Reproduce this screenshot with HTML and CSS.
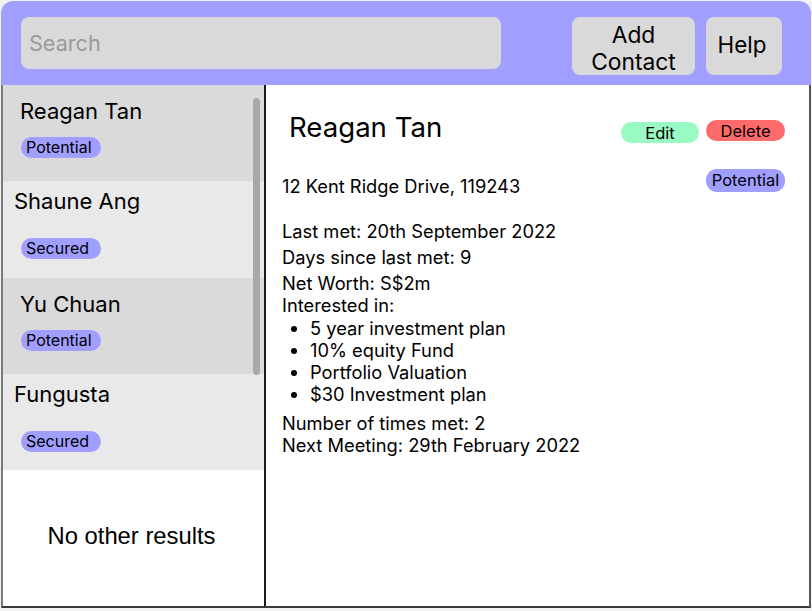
FILE: index.html
```html
<!DOCTYPE html>
<html>
<head>
<meta charset="utf-8">
<link rel="stylesheet" href="styles.css">
</head>
<body>
<div class="app">
  <header class="topbar">
    <div class="search">Search</div>
    <div class="btn btn-add">Add<br>Contact</div>
    <div class="btn btn-help">Help</div>
  </header>
  <main class="main">
    <aside class="sidebar">
      <div class="item item-dark">
        <div class="name">Reagan Tan</div>
        <span class="badge">Potential</span>
      </div>
      <div class="item item-light item-tall">
        <div class="name">Shaune Ang</div>
        <span class="badge">Secured</span>
      </div>
      <div class="item item-dark">
        <div class="name">Yu Chuan</div>
        <span class="badge">Potential</span>
      </div>
      <div class="item item-light">
        <div class="name">Fungusta</div>
        <span class="badge">Secured</span>
      </div>
      <div class="empty">No other results</div>
      <div class="scrollbar"></div>
    </aside>
    <section class="detail">
      <div class="title-row">
        <h1 class="title">Reagan Tan</h1>
        <div class="actions">
          <span class="pill pill-edit">Edit</span>
          <span class="pill pill-delete">Delete</span>
        </div>
      </div>
      <div class="addr-row">
        <div class="addr">12 Kent Ridge Drive, 119243</div>
        <span class="pill pill-status">Potential</span>
      </div>
      <div class="facts">
        <p class="fact spaced">Last met: 20th September 2022</p>
        <p class="fact spaced">Days since last met: 9</p>
        <p class="fact">Net Worth: S$2m</p>
        <p class="fact">Interested in:</p>
        <ul class="interests">
          <li>5 year investment plan</li>
          <li>10% equity Fund</li>
          <li>Portfolio Valuation</li>
          <li>$30 Investment plan</li>
        </ul>
        <p class="fact">Number of times met: 2</p>
        <p class="fact">Next Meeting: 29th February 2022</p>
      </div>
    </section>
  </main>
</div>
</body>
</html>
```

FILE: styles.css
```css
* { box-sizing: border-box; }
html, body { margin: 0; padding: 0; }
body {
  background: #f2f2f2;
  font-family: Inter, "Noto Sans", sans-serif;
  color: #000;
}
.app {
  margin: 1px 0 0 1px;
  width: 810px;
  height: 607px;
  display: flex;
  flex-direction: column;
  border-radius: 12px 12px 0 0;
  overflow: hidden;
  background: #fff;
}
.topbar {
  height: 84px;
  flex: none;
  background: #a09fff;
  display: flex;
  align-items: flex-start;
  padding: 16px 0 0 20px;
}
.search {
  width: 480px;
  height: 52px;
  background: #d9d9d9;
  border-radius: 8px;
  color: #9a9a9a;
  font-size: 21.6px;
  line-height: 52px;
  padding-left: 8px;
}
.btn {
  height: 58px;
  background: #d9d9d9;
  border-radius: 8px;
  line-height: 27px;
  text-align: center;
  display: flex;
  align-items: center;
  justify-content: center;
}
.btn-add { width: 123px; margin-left: 71px; padding-top: 4px; font-size: 22.8px; }
.btn-help { width: 76px; margin-left: 11px; font-size: 22.4px; padding: 0 4px 4px 0; }
.main {
  flex: 1;
  display: flex;
  border-left: 2px solid #7a7a7a;
  border-right: 2px solid #555;
  border-bottom: 2px solid #3a3a3a;
}
.sidebar {
  position: relative;
  width: 263px;
  flex: none;
  border-right: 2px solid #1a1a1a;
  display: flex;
  flex-direction: column;
  background: #fff;
}
.item { height: 96px; flex: none; }
.item-tall { height: 97px; }
.item-dark { background: #dadada; padding: 13px 0 0 17px; }
.item-dark .badge { margin-top: 13px; margin-left: 1px; }
.item-light { background: #e9e9e9; padding: 7px 0 0 11px; }
.item-light .badge { margin-top: 24px; margin-left: 7px; }
.name {
  font-size: 22px;
  line-height: 26px;
}
.badge {
  display: block;
  width: 80px;
  height: 21px;
  border-radius: 11px;
  background: #a09fff;
  font-size: 16px;
  line-height: 21px;
  padding-left: 5px;
}
.empty {
  flex: 1;
  display: flex;
  align-items: center;
  justify-content: center;
  font-family: "Liberation Sans", Arial, sans-serif;
  font-size: 23.8px;
  padding: 0 4px 4px 0;
}
.scrollbar {
  position: absolute;
  left: 250px;
  top: 13px;
  width: 7px;
  height: 277px;
  border-radius: 4px;
  background: #a8a8a8;
}
.detail {
  flex: 1;
  padding: 26px 24px 0 16px;
}
.title-row {
  display: flex;
  justify-content: space-between;
  align-items: flex-start;
}
.title {
  margin: 0 0 0 7px;
  font-size: 27.6px;
  font-weight: 400;
  line-height: 32px;
}
.actions {
  display: flex;
  gap: 7px;
  margin-top: 9px;
}
.pill {
  display: inline-block;
  height: 21px;
  border-radius: 11px;
  font-size: 16.5px;
  line-height: 22px;
  text-align: center;
}
.pill-edit { width: 78px; background: #99fac3; margin-top: 2px; }
.pill-delete { width: 79px; background: #ff6b6b; }
.addr-row {
  display: flex;
  justify-content: space-between;
  align-items: flex-start;
  margin-top: 25px;
}
.addr {
  font-size: 18.3px;
  line-height: 22px;
  margin-top: 7px;
}
.pill-status {
  width: 79px;
  height: 23px;
  line-height: 23px;
  margin-top: 1px;
  background: #a09fff;
}
.facts { margin-top: 23px; }
.fact {
  margin: 0;
  font-size: 18.3px;
  line-height: 22px;
}
.fact.spaced { margin-bottom: 4px; }
.interests {
  margin: 1px 0 7px 0;
  padding-left: 28px;
  font-size: 18.3px;
  line-height: 22px;
}
```
